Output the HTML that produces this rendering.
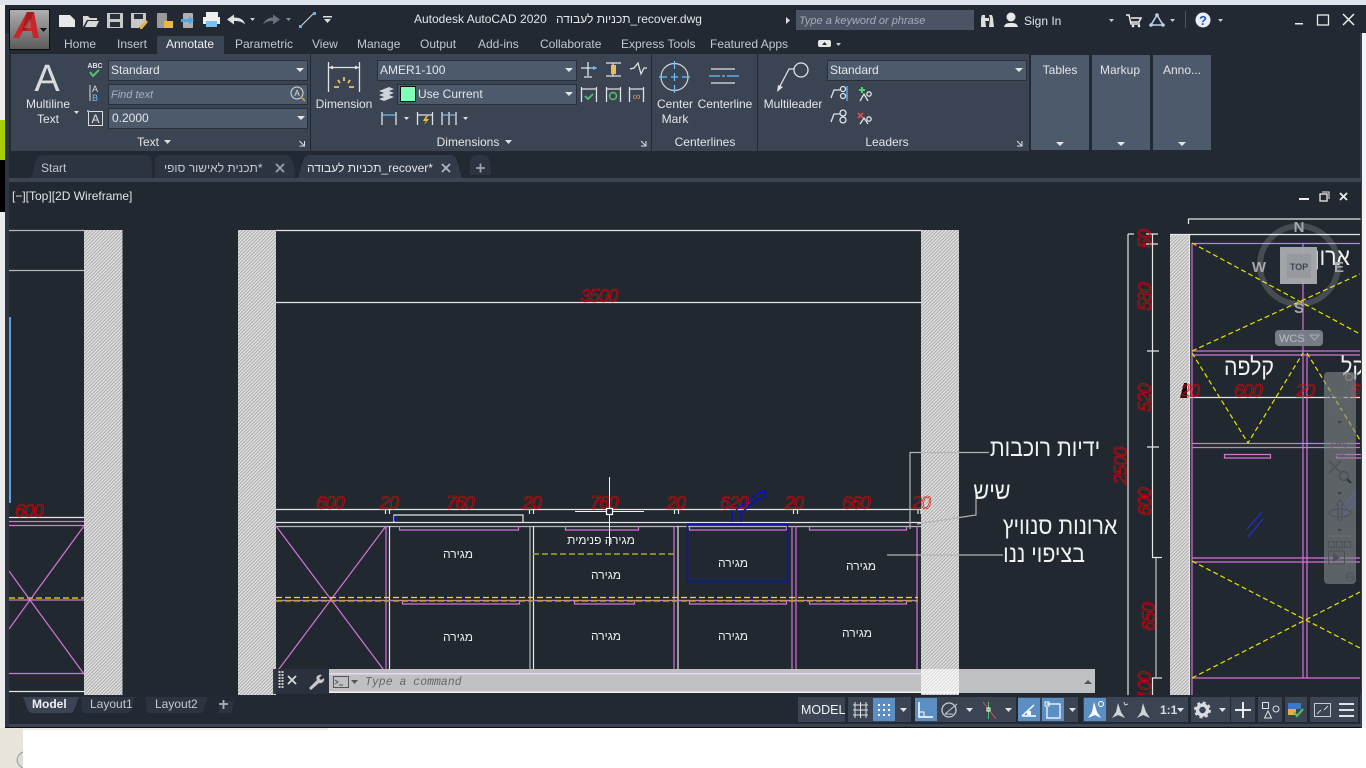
<!DOCTYPE html>
<html lang="en"><head><meta charset="utf-8"><title>Autodesk AutoCAD 2020</title>
<style>
html,body{margin:0;padding:0;width:1366px;height:768px;overflow:hidden;background:#fff}
svg{display:block;position:absolute;left:0;top:0}
text{font-family:"Liberation Sans",sans-serif;font-size:12px;fill:#e4e6e9}
.m{text-anchor:middle}
.tab{fill:#c3c8cf}
.r{fill:none;stroke:#f00000;stroke-width:.6;font-style:italic;font-size:18px;text-anchor:middle;letter-spacing:-.8px}
.h{fill:#f2f2f2;text-anchor:middle;font-size:24px}
.g{fill:#eee;text-anchor:middle;font-size:12px}
.w{stroke:#e6e6e6;stroke-width:1.2;fill:none}
.a{stroke:#b5b5b5;stroke-width:1.2;fill:none}
.p{stroke:#d873d8;stroke-width:1.2;fill:none}
.y{stroke:#e6e600;stroke-width:1.2;fill:none;stroke-dasharray:6 3}
.o{stroke:#a8a81e;stroke-width:1.6;fill:none;stroke-dasharray:6 3}
.b{stroke:#0808e8;stroke-width:1.4;fill:none}
.i{stroke:#e0e2e5;stroke-width:1.3;fill:none}
.c{stroke:#6cc0ff;stroke-width:1.2;fill:none}
.sb{fill:#3b4453}
.on{fill:#5b8fc4}
.s{stroke:#dfe2e6;stroke-width:1.6;fill:none}
</style></head><body>
<svg width="1366" height="768" viewBox="0 0 1366 768">
<defs>
<pattern id="ht" patternUnits="userSpaceOnUse" width="2.4" height="2.4" patternTransform="rotate(-45)">
<rect width="2.4" height="2.4" fill="#e2e2e2"/><rect width="2.4" height=".9" fill="#a2a2a2"/>
</pattern>
<pattern id="ht2" patternUnits="userSpaceOnUse" width="2.4" height="2.4" patternTransform="rotate(-45)">
<rect width="2.4" height="2.4" fill="#f6f6f6"/><rect width="2.4" height=".8" fill="#d6d6d6"/>
</pattern>
<linearGradient id="lg" x1="0" y1="0" x2="0" y2="1"><stop offset="0" stop-color="#b0b0b0"/><stop offset="1" stop-color="#5a5a5a"/></linearGradient>
<clipPath id="dw"><rect x="9" y="182" width="1352" height="513"/></clipPath>
</defs>

<!-- outside -->
<rect width="1366" height="768" fill="#fff"/>
<rect width="1366" height="5" fill="#dfe3ec"/>
<rect y="5" width="5" height="115" fill="#eeeeee"/>
<rect y="120" width="5" height="40" fill="#a8d000"/>
<rect y="160" width="5" height="52" fill="#000"/>
<rect y="212" width="5" height="516" fill="#ececec"/>
<rect x="0" y="728" width="23" height="40" fill="#e9e5dc"/>
<path d="M23 752a8 10 0 0 0-6 8a8 10 0 0 0 6 8" fill="#ddd" stroke="#999"/>
<rect x="23" y="728" width="305" height="2" fill="#f3ece6"/>

<!-- window -->
<rect x="5" y="5" width="1361" height="28" fill="#222933"/>
<rect x="5" y="33" width="1356" height="695" fill="#222933"/>
<rect x="1361" y="33" width="5" height="695" fill="#f4f4f4"/>
<rect x="1360" y="33" width="2" height="695" fill="#38414e"/>
<rect x="5" y="33" width="4" height="695" fill="#2d3541"/>
<rect x="5" y="727" width="1356" height="1" fill="#0c0e11"/>

<!-- App button -->
<rect x="9.500" y="9.500" width="40" height="40" fill="url(#lg)" stroke="#0c0c0c"/>
<path d="M13 38L27 12h7l5 26h-6l-1-7h-9l-4 7z" fill="#c8262a"/>
<path d="M27 12l-5 19h4l8-19z" fill="#a51c20"/>
<path d="M24 28h7l-1-9z" fill="#a8a8a8" fill-opacity=".35"/>
<path d="M40 28h7l-3.500 4z" fill="#111"/>

<!-- QAT -->
<path d="M59 15h11l5 5v7h-16z" fill="#e8e8e8"/>
<path d="M83 27v-11h5l2 2h7v2h-10l-4 7zm2 0l3-6h11l-3 6z" fill="#d8d8d8"/>
<path d="M107 13h16v15h-16z" fill="#c8c8c8"/><rect x="110" y="14" width="10" height="5" fill="#2a3039"/><rect x="110" y="22" width="10" height="5" fill="#2a3039"/>
<path d="M131 13h15v8l-7 7h-8z" fill="#c8c8c8"/><rect x="134" y="14" width="9" height="5" fill="#2a3039"/><path d="M140 27l6-7 2 2-6 7h-2z" fill="#f0b040"/>
<rect x="157" y="13" width="10" height="15" rx="1" fill="#9a9a9a"/><rect x="164" y="21" width="9" height="7" fill="#e8b840"/>
<rect x="183" y="13" width="10" height="15" rx="1" fill="#b0b0b0"/><path d="M181 19h8v-3l5 4.500-5 4.500v-3h-8z" fill="#4aa8e8"/>
<rect x="206" y="12" width="12" height="5" fill="#eee"/><rect x="203" y="17" width="17" height="7" fill="#eee"/><rect x="206" y="21" width="11" height="6" fill="#7ac0f0"/>
<path d="M227 19.500l7-5v3c6 0 10 2 11 7-3-3-6-3.500-11-3.500v3.500z" fill="#e0e0e0"/>
<path d="M250 18h5l-2.500 3z" fill="#ccc"/>
<path d="M280 19.500l-7-5v3c-4 0-8 2-10 7 3-3 6-3.500 10-3.500v3.500z" fill="#6a727e"/>
<path d="M286 18h5l-2.500 3z" fill="#8a909a"/>
<path d="M300 27l14-14" stroke="#ddd" fill="none"/><rect x="299" y="25" width="3" height="3" fill="#5ab4f0"/><rect x="313" y="12" width="3" height="3" fill="#5ab4f0"/>
<rect x="323" y="16" width="9" height="1.500" fill="#ddd"/><path d="M324 19h7l-3.500 4z" fill="#ddd"/>

<!-- Title -->
<text x="414" y="23">Autodesk AutoCAD 2020</text>
<text x="556" y="23" dir="ltr">תכניות לעבודה_recover.dwg</text>
<path d="M786 17l4 3.500-4 3.500z" fill="#ddd"/>
<rect x="796" y="10" width="178" height="20" fill="#4a5464"/>
<text x="799" y="24" font-style="italic" style="fill:#a6adb8;font-size:11px">Type a keyword or phrase</text>
<path d="M981 18l1-3h3v3l1 9h-5zM989 15h3l1 3 1 9h-5l1-9z" fill="#ddd"/><rect x="985" y="18" width="4" height="3" fill="#ddd"/>
<circle cx="1011" cy="17" r="4.500" fill="#e8e8e8"/><path d="M1004 27c1-4 4-4 7-4s6 0 7 4z" fill="#e8e8e8"/>
<text x="1024" y="25">Sign In</text>
<path d="M1109 19h5l-2.500 3z" fill="#ccc"/>
<path d="M1126 15h3l2 9h9M1131 18h10l-2 4h-8" stroke="#eee" stroke-width="1.500" fill="none"/><circle cx="1133" cy="26" r="1.300" fill="#eee"/><circle cx="1139" cy="26" r="1.300" fill="#eee"/>
<path d="M1157 15l-6 10h12z" fill="none" stroke="#bcd0ee" stroke-width="1.600"/><circle cx="1157" cy="15" r="1.800" fill="#bcd0ee"/><circle cx="1151" cy="25" r="1.800" fill="#bcd0ee"/><circle cx="1163" cy="25" r="1.800" fill="#bcd0ee"/>
<path d="M1170 19h5l-2.500 3z" fill="#ccc"/>
<rect x="1185" y="11" width="1" height="17" fill="#4a5464"/>
<circle cx="1203" cy="20" r="7.500" fill="#e8eefc"/><text x="1203" y="25" class="m" style="fill:#2456b8;font-weight:bold;font-size:13px">?</text>
<path d="M1218 19h5l-2.500 3z" fill="#ccc"/>
<rect x="1295" y="23" width="8" height="1.500" fill="#eee"/>
<rect x="1317.500" y="15" width="11" height="10" fill="none" stroke="#eee" stroke-width="1.300"/>
<path d="M1343 14l11 11M1354 14l-11 11" stroke="#eee" stroke-width="1.500"/>

<!-- Ribbon tabs -->
<rect x="157" y="36" width="67" height="18" rx="1" fill="#3b4453"/>
<text x="64" y="48" class="tab">Home</text>
<text x="117" y="48" class="tab">Insert</text>
<text x="166" y="48" style="fill:#eef0f2">Annotate</text>
<text x="235" y="48" class="tab">Parametric</text>
<text x="312" y="48" class="tab">View</text>
<text x="357" y="48" class="tab">Manage</text>
<text x="420" y="48" class="tab">Output</text>
<text x="478" y="48" class="tab">Add-ins</text>
<text x="540" y="48" class="tab">Collaborate</text>
<text x="621" y="48" class="tab">Express Tools</text>
<text x="710" y="48" class="tab">Featured Apps</text>
<rect x="818" y="40" width="13" height="7" rx="2" fill="#e8e8e8"/><path d="M822 45l2.500-3 2.500 3z" fill="#222933"/>
<path d="M836 43h5l-2.500 3z" fill="#ccc"/>

<!-- Ribbon panels -->
<rect x="11" y="54" width="299" height="97" fill="#3b4453"/>
<rect x="311" y="54" width="340" height="97" fill="#3b4453"/>
<rect x="652" y="54" width="105" height="97" fill="#3b4453"/>
<rect x="758" y="54" width="271" height="97" fill="#3b4453"/>
<rect x="1031" y="55" width="58" height="95" fill="#4d5a6c"/>
<rect x="1092" y="55" width="58" height="95" fill="#4d5a6c"/>
<rect x="1153" y="55" width="58" height="95" fill="#4d5a6c"/>
<text x="1060" y="74" class="m">Tables</text>
<text x="1120" y="74" class="m">Markup</text>
<text x="1182" y="74" class="m">Anno...</text>
<path d="M1056 142h8l-4 4zM1117 142h8l-4 4zM1178 142h8l-4 4z" fill="#e4e6e9"/>

<!-- Text panel -->
<text x="47" y="91" class="m" style="font-size:38px;fill:#d8dade">A</text>
<text x="48" y="108" class="m">Multiline</text>
<text x="48" y="123" class="m">Text</text>
<path d="M74 111h5l-2.500 3z" fill="#ddd"/>
<text x="95" y="68" class="m" style="font-size:7px;font-weight:bold">ABC</text>
<path d="M90 72l3 4 6-6" stroke="#55c070" stroke-width="2" fill="none"/>
<path d="M90 85v16" stroke="#ddd"/><text x="95" y="92" class="m" style="font-size:9px;fill:#ddd">A</text><text x="95" y="101" class="m" style="font-size:9px;fill:#6cc0ff">B</text>
<rect x="88.500" y="111.500" width="14" height="14" fill="none" stroke="#ddd"/><text x="95.500" y="123" class="m" style="font-size:12px">A</text><rect x="87" y="110" width="2" height="2" fill="#6cc0ff"/>
<g fill="#4d5a6c" stroke="#2a303a">
<rect x="108.500" y="60.500" width="199" height="20"/>
<rect x="108.500" y="84.500" width="199" height="20"/>
<rect x="108.500" y="108.500" width="199" height="20"/>
<rect x="377.500" y="60.500" width="199" height="20"/>
<rect x="397.500" y="84.500" width="179" height="20"/>
<rect x="827.500" y="60.500" width="199" height="20"/>
</g>
<text x="111" y="74">Standard</text>
<text x="111" y="98" font-style="italic" style="fill:#a9b0ba;font-size:11px">Find text</text>
<circle cx="297" cy="93" r="6" fill="none" stroke="#ddd"/><text x="297" y="96" class="m" style="font-size:8px">A</text><path d="M301 97l4 4" stroke="#d8a850" stroke-width="1.500"/>
<text x="112" y="122">0.2000</text>
<path d="M296 68h8l-4 4zM297 116h8l-4 4zM565 68h8l-4 4zM565 92h8l-4 4zM1015 68h8l-4 4z" fill="#e4e6e9"/>
<text x="148" y="146" class="m">Text</text><path d="M164 140h7l-3.500 4z" fill="#ddd"/>
<path d="M304.500 141v5h-5M304.500 146l-5-5" stroke="#ddd" fill="none"/>

<!-- Dimensions panel -->
<path d="M328.500 62v30M359.500 62v30" class="i"/>
<path d="M329 67.500h30" class="i"/><path d="M329 67.500l4-2v4zM359 67.500l-4-2v4z" fill="#e0e2e5"/>
<path d="M344 77v4M338 80l2 3M350 80l-2 3M334 87h5M349 87h5" stroke="#f0c060" stroke-width="1.800" fill="none"/>
<text x="344" y="108" class="m">Dimension</text>
<text x="380" y="74">AMER1-100</text>
<path d="M379 91l10-4 5 2-10 4zM379 95l10-4 5 2-10 4zM379 99l10-4 5 2-10 4z" fill="#d0d4da"/>
<rect x="400.500" y="86.500" width="15" height="15" fill="#7fffb8" stroke="#111"/>
<text x="418" y="98">Use Current</text>
<path d="M382 112v13M396 112v13" class="i"/><path d="M382 115h14" class="c"/>
<path d="M404 117h5l-2.500 3z" fill="#ddd"/>
<path d="M417.500 112v13M432.500 112v13M418 115h14" class="i"/><path d="M426 116l-3 5h3l-2 4 5-6h-3l2-3z" fill="#f0c030"/>
<path d="M442 112v13M449 112v13M456 112v13" class="i"/><path d="M442 115h14" class="c"/>
<path d="M463 117h5l-2.500 3z" fill="#ddd"/>
<text x="468" y="146" class="m">Dimensions</text><path d="M505 140h7l-3.500 4z" fill="#ddd"/>
<path d="M646 141v5h-5M646 146l-5-5" stroke="#ddd" fill="none"/>
<path d="M581 68h14M588 62v14M584 77h8" class="i"/><path d="M590 68h7" class="c"/><path d="M597 68l-4-2v4z" fill="#6cc0ff"/>
<path d="M606 63h15M606 76h15M613 63v13" class="i"/><rect x="611" y="65" width="5" height="9" fill="#e8c060"/>
<path d="M630 69l4-1 4-5 3 11 3-6h3" class="i"/>
<g class="i"><path d="M581.500 87v15M596.500 87v15M582 89h14M621 87v0"/><path d="M606.500 87v15M620.500 87v15M607 89h13M629.500 87v15M643.500 87v15M630 89h13"/></g>
<path d="M585 96l3 3 5-5" stroke="#55c070" stroke-width="1.800" fill="none"/>
<circle cx="613" cy="96" r="3.500" fill="none" stroke="#55c070" stroke-width="1.500"/>
<text x="636.500" y="100" class="m" style="font-size:11px;fill:#e89050">∞</text>

<!-- Centerlines -->
<circle cx="674.500" cy="77" r="13.500" fill="none" stroke="#cfd2d6" stroke-width="1.200"/>
<path d="M674.500 61v8M674.500 73v8M674.500 85v8M659 77h8M671 77h7M682 77h8" class="c"/>
<text x="675" y="108" class="m">Center</text><text x="675" y="123" class="m">Mark</text>
<path d="M711 69h24M711 83h24" class="i"/><path d="M709 76h11M722 76h3M727 76h12" class="c"/>
<text x="725" y="108" class="m">Centerline</text>
<text x="705" y="146" class="m">Centerlines</text>

<!-- Leaders -->
<circle cx="801" cy="70" r="7" fill="none" stroke="#dfe2e6" stroke-width="1.300"/>
<path d="M794 69h-5l-10 19" class="i"/><path d="M777 92l1-7 5 2z" fill="#dfe2e6"/>
<text x="793" y="108" class="m">Multileader</text>
<text x="830" y="74">Standard</text>
<text x="887" y="146" class="m">Leaders</text>
<path d="M1022 141v5h-5M1022 146l-5-5" stroke="#ddd" fill="none"/>
<g class="i"><path d="M831 98l3-8h6"/><circle cx="843" cy="89" r="2.500"/><circle cx="843" cy="96" r="2.500"/><path d="M831 122l3-8h6"/><circle cx="843" cy="113" r="3"/><circle cx="843" cy="120" r="3"/></g>
<path d="M847 86v15" class="c"/>
<path d="M859 90h6M862 87v6" stroke="#55d070" stroke-width="2"/>
<path d="M858 113l5 5M863 113l-5 5" stroke="#e05050" stroke-width="1.600"/>
<g class="i"><path d="M860 101l4-7 4 7"/><circle cx="869" cy="94" r="2.200"/><path d="M860 124l4-6 4 6"/><circle cx="869" cy="119" r="2.200"/></g>

<!-- File tabs -->
<path d="M30 178c4-2 4-23 12-23h104c6 0 6 5 6 23z" fill="#2c3441"/>
<path d="M155 178v-18c0-3 2-5 6-5h125c5 0 9 8 9 23z" fill="#2c3441"/>
<path d="M297 178c4-2 4-23 12-23h142c8 0 8 21 12 23z" fill="#323b49"/>
<path d="M470 175v-12c0-5 2-8 6-8h9c4 0 6 8 6 20z" fill="#2c3441"/>
<rect x="9" y="178" width="1352" height="4" fill="#3b4453"/>
<text x="41" y="172" class="tab">Start</text>
<text x="164" y="172" class="tab" dir="ltr">תכנית לאישור סופי*</text>
<path d="M276 164l8 8M284 164l-8 8" stroke="#9aa2ad" stroke-width="1.800"/>
<text x="307" y="172" dir="ltr">תכניות לעבודה_recover*</text>
<path d="M442 164l8 8M450 164l-8 8" stroke="#b0b6bf" stroke-width="1.800"/>
<path d="M476 168h9M480.500 163.500v9" stroke="#9aa2ad" stroke-width="1.800"/>

<!-- Drawing -->
<rect x="9" y="182" width="1352" height="513" fill="#212830"/>
<g clip-path="url(#dw)">
<rect x="84" y="230" width="38.500" height="465" fill="url(#ht)"/>
<rect x="238" y="230" width="38" height="465" fill="url(#ht)"/>
<rect x="921" y="230" width="38" height="465" fill="url(#ht)"/>
<rect x="1170" y="234" width="19" height="461" fill="url(#ht)"/>

<!-- left part -->
<path d="M9 230.500h75M9 270.500h75" class="a"/>
<rect x="9" y="317" width="2" height="186" fill="#5a9fe0"/>
<path d="M9 517.500h75" class="w"/><path d="M9 521.500h75M9 525.500h75" class="p"/>
<path d="M9 598h75" class="y"/>
<path d="M9 600h75" class="p"/>
<path d="M84 526L30 600 9 629M84 674L30 600 9 571" class="p"/>
<path d="M9 673.500h75" class="p"/><path d="M9 691.500h75" class="w"/>

<!-- middle -->
<path d="M276 230.500h645M276 302.500h645M276 509.500h645M276 522.500h645" class="w"/>
<path d="M276 526.500h645" class="a"/>
<path d="M385.500 509v5M389.500 509v5M529.500 509v5M533.500 509v5M674.500 509v5M678.500 509v5M793.500 509v5M797.500 509v5M918 509v5M921 509v5" class="w"/>
<path d="M394 522v-7h129v7" class="w"/><path d="M394.500 516v5" stroke="#1020ff"/>
<path d="M276 526l110 147M386 526L276 673" class="p"/>
<path d="M386 526v147M674 526v147M792 526v147M917 526v147" class="p"/>
<path d="M389.500 526v147M533.500 526v147M678 526v147" class="w"/>
<path d="M530 526v147" class="a"/><path d="M796 526v147" class="p"/>
<path d="M399.500 526v4h119v-4M565.500 526v4h73v-4M689.500 527v3h97v-3M809.500 527v3h97v-3" class="p"/>
<path d="M402.500 601v3h117v-3M574.500 601v3h60v-3M689.500 601v3h97v-3M809.500 601v3h97v-3" class="p"/>
<path d="M533 554h145" class="o"/>
<path d="M276 597.500h642" class="y"/>
<path d="M276 600.500h642" class="p"/>
<path d="M276 601h642" class="o"/>
<rect x="687.500" y="524" width="100" height="57.500" class="b"/>
<path d="M732 522v-12M741 522v-11M736 510l22-17 7-2v6l-6 1-18 15" class="b"/>

<!-- dims -->
<text x="599" y="302" class="r">3500</text>
<text x="330" y="509" class="r">600</text>
<text x="389" y="509" class="r">20</text>
<text x="460" y="509" class="r">760</text>
<text x="532" y="509" class="r">20</text>
<text x="604" y="509" class="r">760</text>
<text x="676" y="509" class="r">20</text>
<text x="734" y="509" class="r">620</text>
<text x="794" y="509" class="r">20</text>
<text x="856" y="509" class="r">660</text>
<text x="921" y="509" class="r">20</text>
<text x="29" y="517" class="r">600</text>

<text x="458" y="558" class="g">מגירה</text>
<text x="601" y="544" class="g">מגירה פנימית</text>
<text x="606" y="579" class="g">מגירה</text>
<text x="733" y="567" class="g">מגירה</text>
<text x="861" y="570" class="g">מגירה</text>
<text x="458" y="641" class="g">מגירה</text>
<text x="606" y="640" class="g">מגירה</text>
<text x="733" y="640" class="g">מגירה</text>
<text x="857" y="637" class="g">מגירה</text>

<!-- leaders -->
<path d="M910 529v-76.500h79M917 524l59-9v-22M887 555h116" class="a"/>
<text transform="translate(1045,456) scale(.89,1)" class="h">ידיות רוכבות</text>
<text transform="translate(992,499) scale(.9,1)" class="h">שיש</text>
<text transform="translate(1060,534) scale(.89,1)" class="h">ארונות סנוויץ</text>
<text transform="translate(1044,562) scale(.89,1)" class="h">בציפוי ננו</text>

<!-- crosshair -->
<path d="M575 511.500h69M609.500 477v69" stroke="#f2f2f2" stroke-width="1"/>
<rect x="606.500" y="508.500" width="6" height="6" fill="#212830" stroke="#fff" stroke-width="1.200"/>

<!-- right elevation -->
<path d="M1128 234v461M1128 234h6M1152.500 234v323M1146 234h12M1146 244h12M1147 351h12M1147 447h12M1152 557.500h10M1152 678h10" class="w"/>
<path d="M1156 558v120" stroke="#a8a8a8" stroke-width="1.500"/>
<path d="M1152.500 678v17" class="w"/>
<path d="M1188.500 224v-5h172M1170 234.500h190M1189.500 234v461M1190 397.500h170" class="w"/>
<path d="M1192 243.500h168M1192 351h168M1192 355h168M1192 443.500h168M1192 447.500h168M1192 558h168M1192 562h168M1192 678h168M1192 243v452M1303 243v435M1307 354v324" class="p"/>
<path d="M1224.500 454.500h46v3.500h-46zM1336.500 454.500h25v3.500h-25z" class="p"/>
<path d="M1192 243l168 91M1192 351l168-77M1192 353l56 90 55-90M1307 353l53 87M1192 561l168 87M1192 678l168-86" class="y" style="stroke-dasharray:5 3"/>
<path d="M1247 529l15-17M1248 537l15-18M1340 510l15-17M1341 518l15-17" stroke="#2030e0" stroke-width="1.100" fill="none"/>
<path d="M1180 398l4-15h3v15z" fill="#0c0e12"/>
<text x="1190" y="397" class="r">20</text>
<text x="1248" y="397" class="r">600</text>
<text x="1305" y="397" class="r">20</text>
<text x="1355" y="397" class="r">6</text>
<text transform="translate(1151,239) rotate(-90)" class="r">50</text>
<text transform="translate(1151,297) rotate(-90)" class="r">580</text>
<text transform="translate(1151,398) rotate(-90)" class="r">520</text>
<text transform="translate(1127,466) rotate(-90)" class="r">2500</text>
<text transform="translate(1151,502) rotate(-90)" class="r">600</text>
<text transform="translate(1155,617) rotate(-90)" class="r">650</text>
<text transform="translate(1151,686) rotate(-90)" class="r">100</text>
<text transform="translate(1332,265) scale(.89,1)" class="h">ארון</text>
<text transform="translate(1249,375) scale(.89,1)" class="h">קלפה</text>
<text transform="translate(1353,375) scale(.89,1)" class="h">קל</text>

<!-- viewcube -->
<circle cx="1299" cy="265" r="39" fill="none" stroke="#fff" stroke-opacity=".17" stroke-width="6"/>
<rect x="1280" y="247" width="37" height="37" fill="#aaacaf" fill-opacity=".95"/>
<rect x="1287" y="254" width="24" height="24" fill="#969a9f"/>
<text x="1299" y="270" class="m" style="font-size:9px;font-weight:bold;fill:#3f4650">TOP</text>
<text x="1299" y="232" class="m" style="font-size:15px;font-weight:bold;fill:#a6a8ab">N</text>
<text x="1259" y="272" class="m" style="font-size:15px;font-weight:bold;fill:#a6a8ab">W</text>
<text x="1339" y="272" class="m" style="font-size:15px;font-weight:bold;fill:#a6a8ab">E</text>
<text x="1299" y="313" class="m" style="font-size:15px;font-weight:bold;fill:#a6a8ab">S</text>
<rect x="1275" y="330" width="48" height="16" rx="4" fill="#777c86"/>
<text x="1279" y="342" style="font-size:11px;fill:#b8bbc0">WCS</text>
<path d="M1310 335h9l-4.500 5z" fill="none" stroke="#aaa"/>

<!-- navbar -->
<rect x="1324" y="372" width="32" height="212" rx="4" fill="#85888c" fill-opacity=".6"/>
<circle cx="1349" cy="377" r="3.500" fill="#666" stroke="#888"/>
<circle cx="1340" cy="402" r="10" fill="none" stroke="#5f6267" stroke-width="1.500"/><circle cx="1340" cy="402" r="5" fill="none" stroke="#5f6267" stroke-width="1.500"/>
<path d="M1337 421h5l-2.500 3z" fill="#444"/>
<path d="M1332 455c-1-8 0-15 3-14l2 4 1-6 2 6 2-5 2 6 2-3-2 12z" fill="none" stroke="#5f6267"/>
<path d="M1329 461l12 12M1341 461l-12 12" stroke="#4d5055" stroke-width="1.400"/><circle cx="1344" cy="476" r="4.500" fill="none" stroke="#4d5055" stroke-width="1.400"/><path d="M1347 479l4 4" stroke="#333" stroke-width="2"/>
<path d="M1337 492h5l-2.500 3z" fill="#444"/>
<path d="M1340 500l4 5h-2v15h-4v-15h-2z" fill="none" stroke="#4d5055"/><ellipse cx="1340" cy="513" rx="11" ry="4" fill="none" stroke="#4d5055"/>
<path d="M1337 529h5l-2.500 3z" fill="#444"/>
<path d="M1328 536h26" stroke="#707070"/>
<path d="M1328.500 541.500h6v6h-6zM1336.500 541.500h6v6h-6zM1344.500 541.500h6v6h-6z" fill="none" stroke="#4d5055"/>
<rect x="1328.500" y="551" width="16" height="13" fill="none" stroke="#4d5055"/><path d="M1333 553l7 4.500-7 4.500z" fill="#4d5055"/>
<circle cx="1350" cy="577" r="4" fill="none" stroke="#4d5055"/><path d="M1347 577h6" stroke="#4d5055"/>
</g>

<!-- viewport labels -->
<text x="12" y="200">[−][Top][2D Wireframe]</text>
<rect x="1299" y="198" width="10" height="2" fill="#eee"/>
<rect x="1320" y="194" width="7" height="7" fill="none" stroke="#eee" stroke-width="1.300"/><path d="M1322 192h7v7" fill="none" stroke="#eee"/>
<path d="M1340 193l7 7M1347 193l-7 7" stroke="#eee" stroke-width="1.800"/>

<!-- Command line -->
<rect x="273" y="669" width="56" height="25" fill="#2b323d" fill-opacity=".95"/>
<rect x="329" y="669" width="766" height="24" fill="#bfc0c2"/>
<rect x="921" y="669" width="38" height="25" fill="url(#ht2)"/>
<rect x="329" y="673" width="592" height="1.500" fill="#eed6ee"/>
<rect x="329" y="691.500" width="630" height="1.500" fill="#f4f4f4"/>
<path d="M279.500 671v18M282.500 671v18" stroke="#c8c8c8" stroke-width="2" stroke-dasharray="2 1"/>
<path d="M288 676l8 8M296 676l-8 8" stroke="#d8d8d8" stroke-width="1.800"/>
<path d="M309 688l8-8c-2-3 1-6 5-5l-3 3 2 2 3-2c1 4-3 6-5 5l-8 7z" fill="#c8c8c8"/>
<rect x="333.500" y="676.500" width="15" height="11" fill="none" stroke="#555"/><path d="M335 680l3 2-3 2M339 685h4" stroke="#555" fill="none"/>
<path d="M351 680h7l-3.500 4z" fill="#555"/>
<text x="365" y="685" style="font-family:'Liberation Mono',monospace;font-style:italic;font-size:11.500px;fill:#666">Type a command</text>
<path d="M1084 684h8l-4-4z" fill="#555"/>

<!-- Layout tabs -->
<path d="M22 697h58c-4 2-4 16-10 16h-38c-6 0-6-14-10-16z" fill="#3b4453"/>
<path d="M80 697h56c-4 2-4 16-8 16h-44c-4 0-2-14-4-16z" fill="#2c3441"/>
<path d="M145 697h64c-4 2-4 16-8 16h-52c-4 0-2-14-4-16z" fill="#2c3441"/>
<path d="M217 713c3-1 2-12 8-12h10c-3 3-1 12-6 12z" fill="#2c3441"/>
<text x="32" y="708" style="font-weight:bold;fill:#eef0f3">Model</text>
<text x="90" y="708" class="tab">Layout1</text>
<text x="155" y="708" class="tab">Layout2</text>
<path d="M219 704h9M223.500 700v9" stroke="#aab0b8" stroke-width="1.800"/>

<!-- Status bar -->
<rect x="9" y="724" width="1352" height="3" fill="#3b4453"/>
<rect x="798" y="697" width="47" height="25" class="sb"/>
<rect x="848" y="697" width="63" height="25" class="sb"/>
<rect x="915" y="697" width="101" height="25" class="sb"/>
<rect x="1018" y="697" width="60" height="25" class="sb"/>
<rect x="1083" y="697" width="105" height="25" class="sb"/>
<rect x="1191" y="697" width="39" height="25" class="sb"/>
<rect x="1231" y="697" width="24" height="25" class="sb"/>
<rect x="1258" y="697" width="24" height="25" class="sb"/>
<rect x="1285" y="697" width="22" height="25" class="sb"/>
<rect x="1310" y="697" width="48" height="25" class="sb"/>
<rect x="873" y="698" width="22" height="23" class="on"/>
<rect x="915" y="698" width="22" height="23" class="on"/>
<rect x="1018" y="698" width="22" height="23" class="on"/>
<rect x="1042" y="698" width="22" height="23" class="on"/>
<rect x="1084" y="698" width="22" height="23" class="on"/>
<text x="801" y="714" style="font-size:12.500px;fill:#f2f4f6">MODEL</text>
<path d="M853 705h15M853 710h15M853 715h15M855 702v16M860.500 702v16M866 702v16" stroke="#dfe2e6" fill="none"/>
<g fill="#fff"><rect x="878" y="704" width="2" height="2"/><rect x="883" y="704" width="2" height="2"/><rect x="888" y="704" width="2" height="2"/><rect x="878" y="709" width="2" height="2"/><rect x="883" y="709" width="2" height="2"/><rect x="888" y="709" width="2" height="2"/><rect x="878" y="714" width="2" height="2"/><rect x="883" y="714" width="2" height="2"/><rect x="888" y="714" width="2" height="2"/></g>
<path d="M900 708h7l-3.500 4z" fill="#dfe2e6"/>
<path d="M919 702v15h14" stroke="#fff" stroke-width="1.500" fill="none"/><rect x="919" y="712" width="5" height="5" fill="none" stroke="#fff"/>
<circle cx="949" cy="710" r="7" fill="none" stroke="#c8ccd2" stroke-width="1.300"/><path d="M945 714l12-10M945 714h8" stroke="#c8ccd2" fill="none"/>
<path d="M966 708h7l-3.500 4z" fill="#dfe2e6"/>
<path d="M983 702l13 17" stroke="#e05050"/><path d="M988.500 702v17" stroke="#55c070"/><rect x="987" y="708" width="3" height="3" fill="none" stroke="#fff"/>
<path d="M1005 708h7l-3.500 4z" fill="#dfe2e6"/>
<path d="M1022 716h14M1022 716l12-11" stroke="#fff" stroke-width="1.500" fill="none"/><rect x="1027" y="711" width="4" height="4" fill="#fff"/>
<path d="M1047 704h13v14h-13v-11" stroke="#fff" stroke-width="1.200" fill="none"/><rect x="1045" y="702" width="4" height="4" fill="none" stroke="#fff"/>
<path d="M1069 708h7l-3.500 4z" fill="#dfe2e6"/>
<path d="M1094 702l3 10 4 6-6-3-7 3 4-6z" fill="#fff"/><circle cx="1101" cy="704" r="2.500" fill="none" stroke="#fff"/>
<path d="M1118 703l3 9 4 6-7-3-6 3 4-6z" fill="#d0d3d8"/><path d="M1124 702l1 3 3-1" stroke="#d0d3d8" fill="none"/>
<path d="M1143 703l3 9 4 6-7-3-6 3 4-6z" fill="#d0d3d8"/>
<text x="1160" y="714" style="fill:#d8dbe0;font-weight:bold">1:1</text>
<path d="M1177 708h7l-3.500 4z" fill="#dfe2e6"/>
<circle cx="1202.500" cy="710" r="5" fill="none" stroke="#d8dbe0" stroke-width="3.500"/>
<circle cx="1202.500" cy="710" r="7.500" fill="none" stroke="#d8dbe0" stroke-width="2" stroke-dasharray="3 2.900"/>
<path d="M1219 708h7l-3.500 4z" fill="#dfe2e6"/>
<path d="M1243 702v16M1235 710h16" stroke="#e8eaec" stroke-width="2"/>
<rect x="1262.500" y="702.500" width="6" height="6" fill="none" stroke="#dfe2e6"/><circle cx="1276" cy="709" r="3" fill="none" stroke="#dfe2e6"/><path d="M1268 711l-3.500 7h7z" fill="none" stroke="#dfe2e6"/>
<rect x="1288" y="703" width="13" height="6" fill="#3a7ac0"/><rect x="1288" y="709" width="8" height="6" fill="#e8b030"/><path d="M1294 712l3 4 6-7" stroke="#55c070" stroke-width="2" fill="none"/>
<rect x="1314.500" y="703.500" width="16" height="13" fill="none" stroke="#c8ccd2"/><path d="M1317 714l4-4M1328 706l-4 4" stroke="#c8ccd2"/>
<path d="M1339 704h15M1339 710h15M1339 716h15" stroke="#e0e3e6" stroke-width="2"/>
</svg>
</body></html>
